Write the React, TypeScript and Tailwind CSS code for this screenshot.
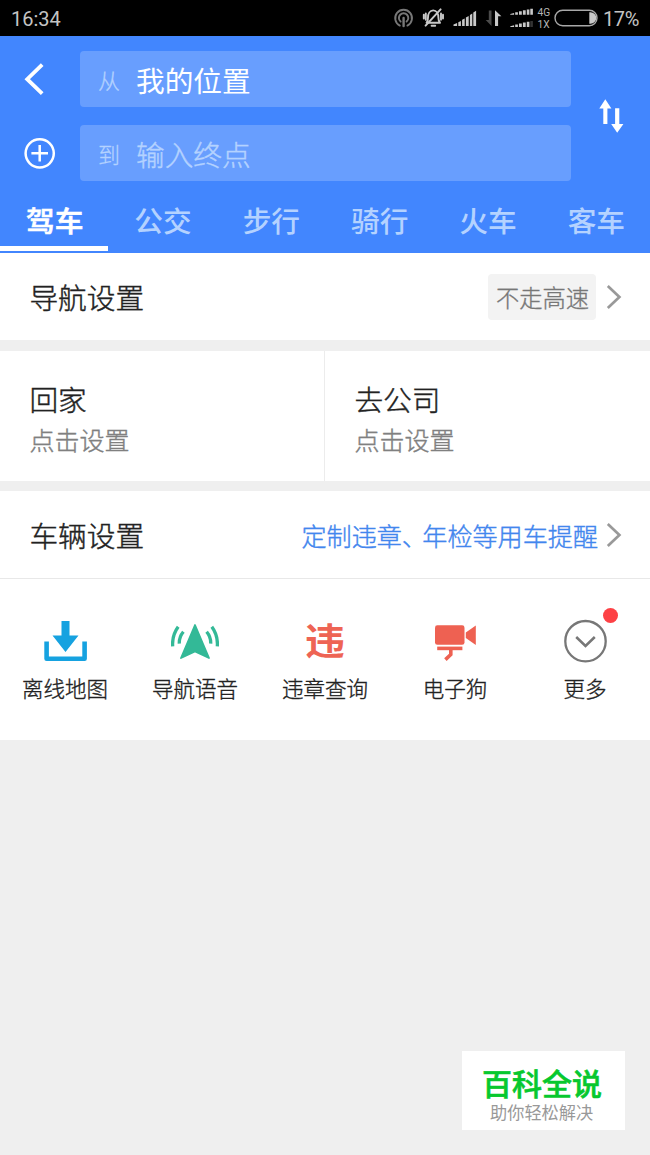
import type { ReactNode } from "react";

const TABS = ["驾车", "公交", "步行", "骑行", "火车", "客车"];

function StatusBar() {
  return (
    <div className="flex h-9 items-center bg-black pl-[11px] pr-[11px] font-['Roboto',sans-serif] text-[20px] text-[#c4c4c4]">
      <span className="mt-[1px] leading-none">16:34</span>
      <svg className="ml-auto" width="206" height="36" viewBox="392 0 206 36" fill="none">
        <g stroke="#777" strokeWidth="1.9" strokeLinecap="round">
          <path d="M399.8 25.6a8.4 8.4 0 1 1 7.6 0" />
          <path d="M400.6 21.6a4.7 4.7 0 1 1 6 0" />
          <path d="M403.6 18v8" strokeWidth="2.4" />
        </g>
        <g stroke="#c8c8c8" strokeWidth="1.9" strokeLinecap="round" strokeLinejoin="round">
          <path d="M426.6 22.8c1.4-1.3 1.4-3 1.4-5.2 0-4 2-7.2 5.2-7.2s5.2 3.2 5.2 7.2c0 2.2.2 3.9 1.6 5.2Z" />
          <path d="M431.6 25.8h3.6M425.8 13.4v6.4M423.8 14.8v3.8M441 13.4v6.4M443 14.8v3.8" />
          <path d="M425.6 25.6 440.6 9.4" strokeWidth="2" />
        </g>
        <g fill="#c8c8c8">
          <path d="M453.5 26v-1.6l3.6-1.3V26zM458.3 26v-3.8l2.6-1.2v5zM462.1 26v-6.2l2.6-1.2V26zM465.9 26v-8.6l2.8-1.4v10zM469.9 26V15l2.4-1.6V26zM473.3 26V12.5l2.8-1.7V26z" />
          <path d="M495 26V10.2l6.4 6.1h-3.3V26z" />
          <path d="M491.5 10.5V26l-5.8-6.1h3.1v-9.4z" fill="#4b4b4b" />
          <path d="M510.3 14.8v-.8l3.8-1v1.8zM515.2 14.8v-2.5h2.7v2.5zM519 14.8v-3.6h2.8v3.6zM522.9 14.8v-4.5h2.8v4.5zM526.8 14.8V9.6h2.6v5.2zM530.3 14.8V8.8h2.6v6z" />
          <path d="M510.3 27v-.8l3.8-1V27zM515.2 27v-2.5h2.7V27zM519 27v-3.6h2.8V27zM522.9 27v-4.5h2.8V27zM526.8 27v-5.2h2.6V27z" />
          <path d="M530.3 27v-6h2.6v6z" fill="#333" />
          <path d="M589.3 12.2h1.2a5.8 5.8 0 0 1 0 11.6h-1.2z" />
        </g>
        <rect x="555" y="10.3" width="42" height="15.4" rx="7.7" stroke="#a8a8a8" strokeWidth="1.4" />
        <text x="537.6" y="16.4" fill="#b4b4b4" fontSize="10.2">4G</text>
        <text x="537.6" y="28" fill="#b4b4b4" fontSize="10.2">1X</text>
      </svg>
      <span className="ml-[5px] mt-[1px] w-[36px] whitespace-nowrap leading-none tracking-[-0.4px]">17%</span>
    </div>
  );
}

function Field({ label, value, muted }: { label: string; value: string; muted?: boolean }) {
  return (
    <div className="flex h-14 items-center rounded-[4px] bg-[#689efe] pl-[18px]">
      <span className="w-[38px] text-[22px] font-light leading-none text-[#b4d2ff] [-webkit-text-stroke:0.3px]">
        {label}
      </span>
      <span
        className={
          muted
            ? "mt-[2px] text-[28.7px] font-light leading-none text-[#b4d2ff] [-webkit-text-stroke:0.4px]"
            : "mt-[2px] text-[28.7px] leading-none text-white"
        }
      >
        {value}
      </span>
    </div>
  );
}

function Header() {
  return (
    <header className="flex h-[217px] flex-col bg-[#4286fe]">
      <div className="flex pt-[15px]">
        <div className="flex w-[80px] shrink-0 flex-col gap-[18px]">
          <svg width="80" height="56" viewBox="0 0 80 56" fill="none" stroke="#fff" strokeWidth="3.8">
            <path d="M42.2 13.6 27.2 28.2 42.2 42.6" />
          </svg>
          <svg width="80" height="56" viewBox="0 0 80 56" fill="none" stroke="#fff" strokeWidth="2.5">
            <circle cx="39.7" cy="28.3" r="14.1" />
            <path d="M39.7 20v16.6M31.4 28.3H48" />
          </svg>
        </div>
        <div className="flex w-[491px] flex-col gap-[18px]">
          <Field label="从" value="我的位置" />
          <Field label="到" value="输入终点" muted />
        </div>
        <svg width="79" height="130" viewBox="571 51 79 130" fill="#fff">
          <path d="M605.3 99.2 611.4 108.4H607.4V124H603.3V108.4H599.3Z" />
          <path d="M617.2 132.8 611.2 124H615.1V108.2H619.3V124H623.4Z" />
        </svg>
      </div>
      <nav className="grid flex-1 grid-cols-6">
        {TABS.map((tab, i) => (
          <div key={tab} className="flex flex-col items-center">
            <span
              className={
                i === 0
                  ? "ml-px mt-[18px] h-[47px] text-[28.7px] font-medium leading-[42px] text-white [-webkit-text-stroke:0.6px]"
                  : "ml-px mt-[18px] h-[47px] text-[28.7px] font-medium leading-[42px] text-[#b4d2ff]"
              }
            >
              {tab}
            </span>
            {i === 0 && <span className="h-[5px] w-full bg-white" />}
          </div>
        ))}
      </nav>
    </header>
  );
}

function Chevron() {
  return (
    <svg width="16" height="26" viewBox="0 0 16 26" fill="none" stroke="#999" strokeWidth="2.7">
      <path d="M1.8 2 13.4 13 1.8 24" />
    </svg>
  );
}

function Place({ title }: { title: string }) {
  return (
    <div className="flex-1 pl-[29.4px] pt-[27px] font-light [-webkit-text-stroke:0.4px]">
      <div className="text-[28.7px] leading-[42px] text-[#222]">{title}</div>
      <div className="text-[25px] leading-[38px] text-[#808080]">点击设置</div>
    </div>
  );
}

function Tool({ label, children }: { label: string; children: ReactNode }) {
  return (
    <div className="flex flex-col items-center">
      <div className="relative mt-[38px] flex h-[48px] w-[48px] items-center justify-center">{children}</div>
      <span className="mt-[8px] text-[21.5px] font-light leading-[30px] text-[#222] [-webkit-text-stroke:0.35px]">
        {label}
      </span>
    </div>
  );
}

function Tools() {
  return (
    <div className="grid h-[161px] grid-cols-5 bg-white">
      <Tool label="离线地图">
        <svg width="48" height="48" viewBox="0 0 48 48">
          <path d="M20.5 4h8v14.5h9L24.5 35 11.5 18.5h9z" fill="#16a2e0" />
          <path d="M5.6 24.5v17.2h38V24.5" fill="none" stroke="#16a2e0" strokeWidth="4.6" strokeLinejoin="round" />
        </svg>
      </Tool>
      <Tool label="导航语音">
        <svg width="48" height="48" viewBox="0 0 48 48" fill="none" stroke="#33b997">
          <path d="M24 8 38 41 24 34.4 10 41Z" fill="#33b997" strokeWidth="1.8" strokeLinejoin="round" />
          <path d="M7.2 9.8Q.8 18.5 1.7 29.4M12.4 14.8Q8 20 8.3 26.6" strokeWidth="3.3" />
          <path d="M40.8 9.8Q47.2 18.5 46.3 29.4M35.6 14.8Q40 20 39.7 26.6" strokeWidth="3.3" />
        </svg>
      </Tool>
      <Tool label="违章查询">
        <span className="-mt-[5px] block scale-y-[0.93] text-[40px] font-bold leading-none text-[#ee6454]">违</span>
      </Tool>
      <Tool label="电子狗">
        <svg width="48" height="48" viewBox="0 0 48 48" fill="#ee6152">
          <rect x="4" y="8.3" width="29.5" height="19.5" rx="2.4" />
          <path d="M34.8 15.5 44.8 8.5V28L34.8 21Z" />
          <rect x="6.2" y="29.6" width="25.2" height="3.6" />
          <path d="M19.8 32v5.5L14.4 42.6" fill="none" stroke="#ee6152" strokeWidth="3.6" />
        </svg>
      </Tool>
      <Tool label="更多">
        <svg width="48" height="48" viewBox="0 0 48 48" fill="none" stroke="#777" strokeWidth="2.3">
          <circle cx="24.5" cy="24.2" r="20.2" />
          <path d="M15.2 20 24.5 29 33.8 20" strokeWidth="2.5" />
        </svg>
        <span className="absolute left-[42px] top-[-9px] h-[15px] w-[15px] rounded-full bg-[#fd4145]" />
      </Tool>
    </div>
  );
}

export default function App() {
  return (
    <div className="relative flex h-[1155px] w-[650px] flex-col overflow-hidden bg-[#efefef] font-['Noto_Sans_CJK_SC',sans-serif]">
      <StatusBar />
      <Header />
      <section className="flex h-[87px] items-center bg-white pl-[29.4px] pr-[28px]">
        <span className="text-[28.7px] font-light leading-[42px] text-[#222] [-webkit-text-stroke:0.4px]">导航设置</span>
        <span className="ml-auto mr-[10px] flex h-[46px] w-[108px] items-center justify-center rounded-[4px] bg-[#f3f3f3] pl-px pt-[2px] text-[23.3px] font-light leading-none text-[#777] [-webkit-text-stroke:0.35px]">
          不走高速
        </span>
        <Chevron />
      </section>
      <section className="mt-[11px] flex h-[130px] bg-white">
        <div className="flex w-[325px] border-r border-[#ececec]">
          <Place title="回家" />
        </div>
        <Place title="去公司" />
      </section>
      <section className="mt-[10px] flex h-[88px] items-center border-b border-[#e8e8e8] bg-white pl-[29.4px] pr-[28px]">
        <span className="text-[28.7px] font-light leading-[42px] text-[#222] [-webkit-text-stroke:0.4px]">车辆设置</span>
        <span className="ml-auto mr-[8px] text-[25.1px] font-light leading-[40px] text-[#4286ee] [-webkit-text-stroke:0.4px]">
          定制违章<span className="tracking-[-4.6px]">、</span>年检等用车提醒
        </span>
        <Chevron />
      </section>
      <Tools />
      <aside className="absolute left-[462px] top-[1051px] flex h-[79px] w-[163px] flex-col bg-white pl-[20px]">
        <span className="mt-[15px] text-[30px] font-medium leading-[32px] text-[#07c82e] [-webkit-text-stroke:0.6px]">
          百科全说
        </span>
        <span className="ml-[8px] mt-[4px] text-[17.2px] leading-[20px] text-[#999]">助你轻松解决</span>
      </aside>
    </div>
  );
}
